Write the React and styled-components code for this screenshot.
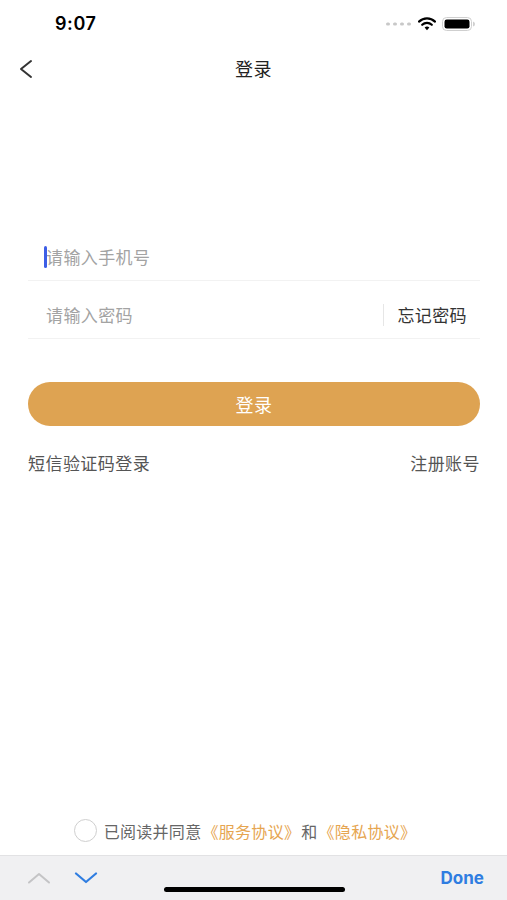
import React from 'react';
import styled, {createGlobalStyle} from 'styled-components';

const GlobalStyle = createGlobalStyle`
    body {
        margin: 0;
        background: #fff;
        font-family: "Noto Sans CJK SC", "Noto Sans", sans-serif;
    }
`

const App = () => {
    return(
        <Screen>
            <GlobalStyle />
            <StatusBar>
                <Time>9:07</Time>
                <StatusIcons>
                    <svg width="26" height="4" viewBox="0 0 26 4">
                        {[0, 7, 14, 21].map((x) => (
                            <rect key={x} x={x} y="0.5" width="4" height="3" rx="1.5" fill="#c8c8c8" />
                        ))}
                    </svg>
                    <svg width="18" height="14" viewBox="0 0 18 14">
                        <path d="M1 4.6 A11.5 11.5 0 0 1 17 4.6" stroke="#000" strokeWidth="2.2" fill="none" strokeLinecap="round" />
                        <path d="M4.2 7.8 A7 7 0 0 1 13.8 7.8" stroke="#000" strokeWidth="2.2" fill="none" strokeLinecap="round" />
                        <path d="M6.6 10.6 L9 13.2 L11.4 10.6 A3.4 3.4 0 0 0 6.6 10.6 Z" fill="#000" />
                    </svg>
                    <svg width="34" height="14" viewBox="0 0 34 14">
                        <rect x="0.5" y="0.5" width="29" height="13" rx="4" fill="none" stroke="#cfcfcf" />
                        <rect x="2.5" y="2.5" width="25" height="9" rx="2.2" fill="#000" />
                        <path d="M31 4.5 Q33 5 33 7 Q33 9 31 9.5 Z" fill="#cfcfcf" />
                    </svg>
                </StatusIcons>
            </StatusBar>

            <NavBar>
                <BackButton>
                    <svg width="14" height="20" viewBox="0 0 14 20">
                        <path d="M12 2 L2 10 L12 18" stroke="#333" strokeWidth="2" fill="none" strokeLinecap="round" strokeLinejoin="round" />
                    </svg>
                </BackButton>
                <Title>登录</Title>
            </NavBar>

            <Form>
                <Field>
                    <Cursor />
                    <Placeholder>请输入手机号</Placeholder>
                </Field>
                <Field>
                    <Placeholder>请输入密码</Placeholder>
                    <Separator />
                    <Forgot>忘记密码</Forgot>
                </Field>

                <LoginButton>登录</LoginButton>

                <Links>
                    <LinkText>短信验证码登录</LinkText>
                    <LinkText>注册账号</LinkText>
                </Links>
            </Form>

            <Spacer />

            <Agreement>
                <Radio />
                <span>已阅读并同意</span>
                <Highlight>《服务协议》</Highlight>
                <span>和</span>
                <Highlight>《隐私协议》</Highlight>
            </Agreement>

            <Toolbar>
                <Arrows>
                    <svg width="24" height="12" viewBox="0 0 24 12">
                        <path d="M2 10.5 L12 2 L22 10.5" stroke="#c4c4c6" strokeWidth="2" fill="none" strokeLinecap="round" strokeLinejoin="round" />
                    </svg>
                    <svg width="24" height="12" viewBox="0 0 24 12">
                        <path d="M2 1.5 L12 10 L22 1.5" stroke="#2f7de1" strokeWidth="2.2" fill="none" strokeLinecap="round" strokeLinejoin="round" />
                    </svg>
                </Arrows>
                <Done>Done</Done>
                <HomeIndicator />
            </Toolbar>
        </Screen>
    )
}

const Screen = styled.div`
    width: 507px;
    height: 900px;
    display: flex;
    flex-direction: column;
    background: #fff;
    overflow: hidden;
`

const StatusBar = styled.div`
    height: 46px;
    display: flex;
    align-items: center;
    justify-content: space-between;
    padding: 0 31px 0 55px;
    box-sizing: border-box;
`

const Time = styled.div`
    font-family: Inter, "Liberation Sans", sans-serif;
    font-weight: 600;
    font-size: 18px;
    letter-spacing: 0.6px;
    color: #000;
    margin-top: 1px;
`

const StatusIcons = styled.div`
    display: flex;
    align-items: center;
    gap: 6px;
    margin-top: 1px;
`

const NavBar = styled.div`
    position: relative;
    height: 44px;
    display: flex;
    align-items: center;
    justify-content: center;
`

const BackButton = styled.div`
    position: absolute;
    left: 19px;
    top: 13px;
    display: flex;
`

const Title = styled.div`
    font-size: 18px;
    letter-spacing: 0.5px;
    color: #222;
`

const Form = styled.div`
    margin-top: 133px;
    padding: 0 27px 0 28px;
    display: flex;
    flex-direction: column;
`

const Field = styled.div`
    position: relative;
    height: 58px;
    box-sizing: border-box;
    border-bottom: 1px solid #f2f2f2;
    display: flex;
    align-items: center;
    padding: 10px 13px 0 18px;
`

const Cursor = styled.div`
    position: absolute;
    left: 16px;
    top: 23px;
    width: 3px;
    height: 22px;
    border-radius: 2px;
    background: #3d5ee6;
`

const Placeholder = styled.div`
    flex: 1;
    font-size: 17px;
    letter-spacing: 0.4px;
    color: #a3a3a3;
    line-height: 22px;
`

const Separator = styled.div`
    width: 1px;
    height: 22px;
    background: #e6e6e6;
    margin-right: 13px;
`

const Forgot = styled.div`
    font-size: 17px;
    letter-spacing: 0.4px;
    color: #333;
    line-height: 22px;
`

const LoginButton = styled.div`
    margin-top: 43px;
    height: 44px;
    border-radius: 22px;
    background: #dea352;
    color: #fff;
    font-size: 18px;
    letter-spacing: 0.5px;
    display: flex;
    align-items: center;
    justify-content: center;
`

const Links = styled.div`
    margin-top: 26px;
    display: flex;
    justify-content: space-between;
`

const LinkText = styled.div`
    font-size: 17px;
    letter-spacing: 0.45px;
    color: #555;
    line-height: 22px;
`

const Spacer = styled.div`
    flex: 1;
`

const Agreement = styled.div`
    display: flex;
    align-items: center;
    justify-content: center;
    padding-right: 17px;
    margin-bottom: 13px;
    font-size: 16px;
    letter-spacing: 0.3px;
    line-height: 22px;
    color: #666;

    span {
        margin: 0 1px;
    }
`

const Radio = styled.div`
    width: 21px;
    height: 21px;
    border-radius: 50%;
    border: 1px solid #cfcfcf;
    margin-right: 6px;
`

const Highlight = styled.div`
    color: #e6a550;
`

const Toolbar = styled.div`
    position: relative;
    height: 44px;
    background: #f0f0f2;
    border-top: 1px solid #e2e2e4;
    display: flex;
    align-items: center;
    justify-content: space-between;
    padding: 0 23px 0 27px;
`

const Arrows = styled.div`
    display: flex;
    align-items: center;
    gap: 23px;
`

const Done = styled.div`
    font-family: Inter, "Liberation Sans", sans-serif;
    font-weight: 700;
    font-size: 17px;
    color: #2f7de1;
`

const HomeIndicator = styled.div`
    position: absolute;
    left: 164px;
    bottom: 8px;
    width: 181px;
    height: 5px;
    border-radius: 3px;
    background: #000;
`

export default App
